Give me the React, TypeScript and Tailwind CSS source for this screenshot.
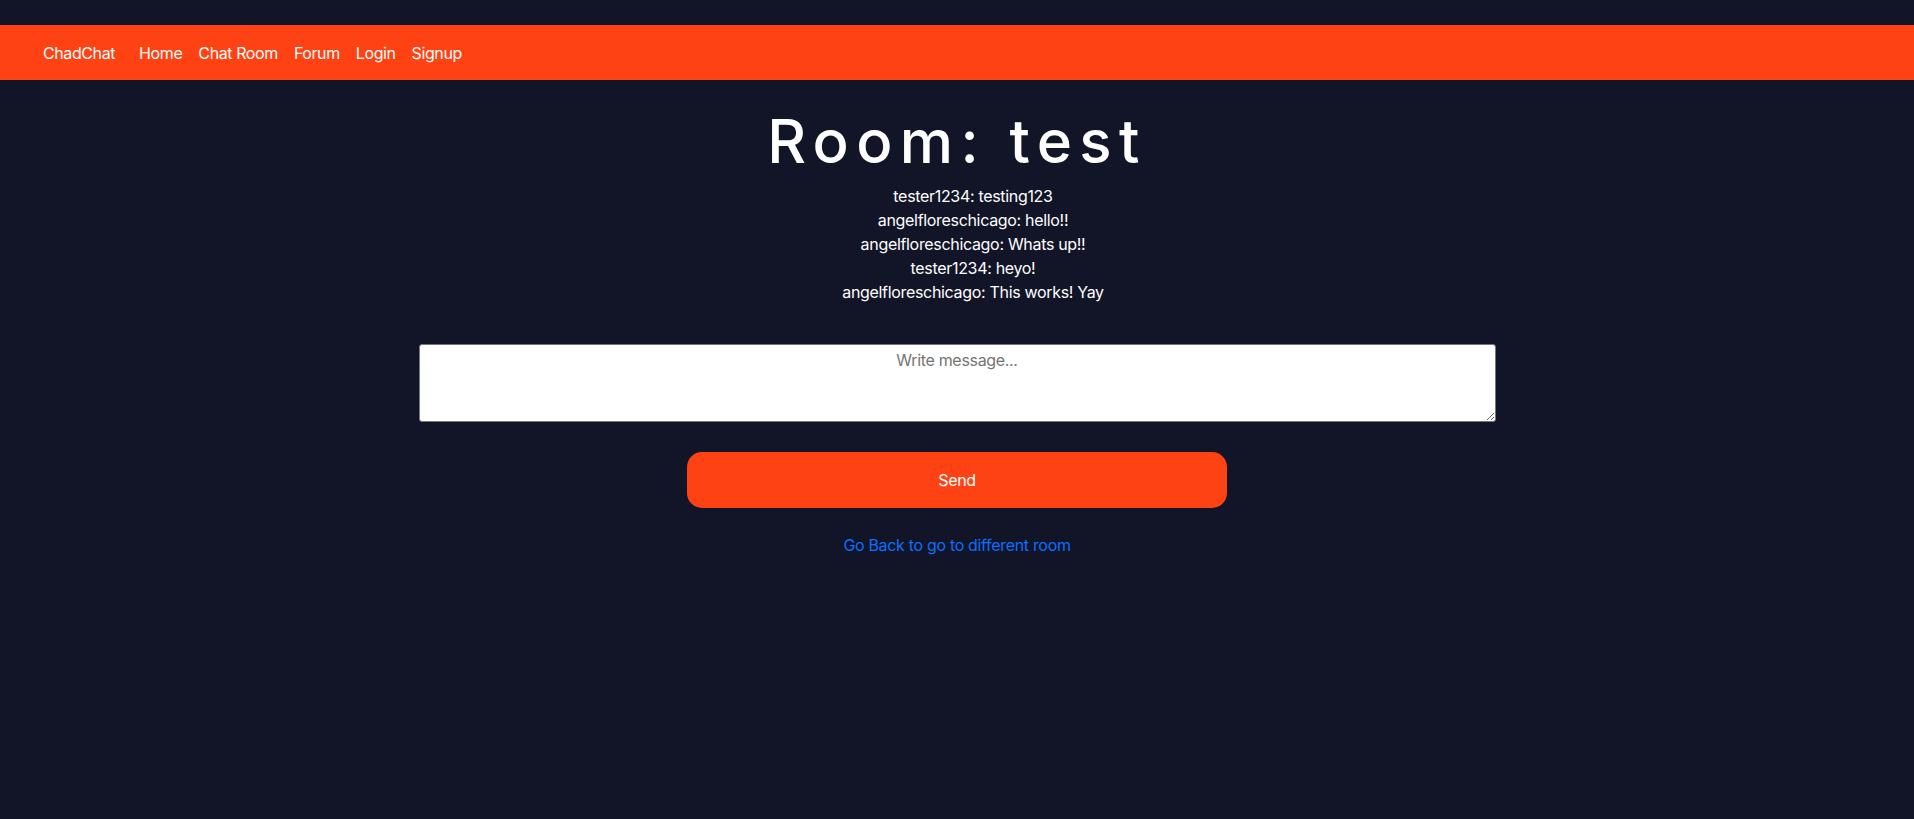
import React from 'react'

const navLinks = ['Home', 'Chat Room', 'Forum', 'Login', 'Signup']

const messages = [
  { user: 'tester1234', text: 'testing123' },
  { user: 'angelfloreschicago', text: 'hello!!' },
  { user: 'angelfloreschicago', text: 'Whats up!!' },
  { user: 'tester1234', text: 'heyo!' },
  { user: 'angelfloreschicago', text: 'This works! Yay' }
]

const Navbar: React.FC = () => (
  <nav className="mt-6 h-[55px] bg-[#ff4213] flex items-center px-[43px] text-white text-base tracking-[-0.025em]">
    <a href="#" className="mr-4">ChadChat</a>
    <ul className="flex items-center">
      {navLinks.map((link) => (
        <li key={link}>
          <a href="#" className="px-2">{link}</a>
        </li>
      ))}
    </ul>
  </nav>
)

const App: React.FC = () => {
  return (
    <div
      className="min-h-[819px] bg-[#121428] text-white"
      style={{ fontFamily: 'Inter, "Noto Sans", sans-serif' }}
    >
      <div className="h-[1px]" />
      <Navbar />

      <main className="flex flex-col items-center tracking-[-0.02em]">
        <h1 className="mt-[25px] text-[60px] leading-[72px] font-medium tracking-[0.123em]">
          Room: test
        </h1>

        <ul className="mt-[7px] pl-8 text-center text-base leading-6">
          {messages.map((m, i) => (
            <li key={i}>
              {m.user}: {m.text}
            </li>
          ))}
        </ul>

        <textarea
          placeholder="Write message..."
          className="mt-[40px] w-[1077px] h-[78px] bg-white border border-[#767676] rounded-[3px] text-center text-base text-black placeholder:text-[#757575] px-2 pt-[3px]"
        />

        <button className="mt-[30px] w-[540px] h-[56px] rounded-[15px] bg-[#ff4213] text-white text-base">
          Send
        </button>

        <a href="#" className="mt-[25px] text-[#0d6efd] text-base">
          Go Back to go to different room
        </a>
      </main>
    </div>
  )
}

export default App
